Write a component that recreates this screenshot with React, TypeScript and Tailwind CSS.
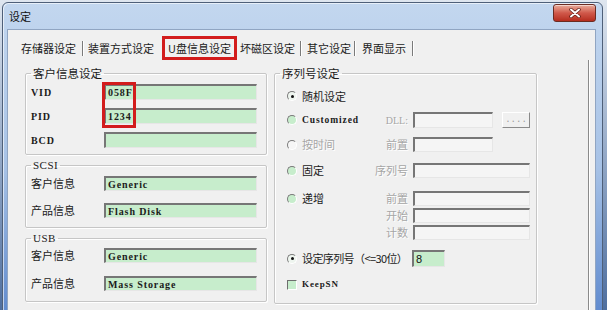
import type { ReactNode } from "react";

const cjk = "font-['Noto_Sans_CJK_SC',sans-serif]";
const latin = "font-['Liberation_Serif',serif] font-bold tracking-[0.9px]";

function Field({
  green = false,
  className = "",
  children,
}: {
  green?: boolean;
  className?: string;
  children?: ReactNode;
}) {
  return (
    <div
      className={`flex items-center pl-[2px] border-t-2 border-l-2 border-r border-b border-t-[#767676] border-l-[#767676] border-r-[#e6e6e6] border-b-[#e6e6e6] ${
        green ? "bg-[#c7edcc]" : "bg-[#f5f5f5]"
      } ${className}`}
    >
      {children}
    </div>
  );
}

function Radio({ checked = false, disabled = false }: { checked?: boolean; disabled?: boolean }) {
  return (
    <span
      className={`w-[10px] h-[10px] shrink-0 rounded-full border border-t-[#7a7a7a] border-l-[#7a7a7a] border-r-[#ffffff] border-b-[#ffffff] flex items-center justify-center ${
        disabled ? "bg-[#f6f6f6]" : checked ? "bg-[#eef5ef]" : "bg-[#c7edcc]"
      }`}
    >
      {checked && <span className="w-[3px] h-[3px] rounded-full bg-[#111]" />}
    </span>
  );
}

function GroupBox({
  title,
  titleClass,
  className = "",
  children,
}: {
  title: string;
  titleClass: string;
  className?: string;
  children: ReactNode;
}) {
  return (
    <fieldset
      className={`border border-[#c6c6c6] rounded-[2px] shadow-[inset_1px_1px_0_#ffffff,1px_1px_0_#ffffff] ${className}`}
    >
      <legend className={`ml-[5px] px-[2px] leading-[14px] text-[#1b1b1b] ${titleClass}`}>{title}</legend>
      {children}
    </fieldset>
  );
}

function InfoRow({ label, isLatin = false, value, rowClass }: { label: string; isLatin?: boolean; value: ReactNode; rowClass: string }) {
  return (
    <div className={`flex items-center ${rowClass}`}>
      <span className={`w-[73px] ${isLatin ? `${latin} text-[10px]` : `${cjk} text-[11px]`} text-[#1b1b1b]`}>
        {label}
      </span>
      <Field green className="w-[153px] h-full">
        <span className={`${latin} text-[10px] text-[#1b1b1b]`}>{value}</span>
      </Field>
    </div>
  );
}

function Sep({ className }: { className: string }) {
  return <span className={`block w-px h-[15px] bg-[#7a7a7a] shadow-[1px_0_0_#ffffff] shrink-0 ${className}`} />;
}

function Label({ children }: { children: ReactNode }) {
  return (
    <span className={`w-[38px] text-right ${cjk} text-[11px] text-[#a6a6a6] [text-shadow:1px_1px_0_#ffffff]`}>
      {children}
    </span>
  );
}

export default function App() {
  return (
    <div className="w-[607px] h-[310px] overflow-hidden bg-gradient-to-b from-[#dfe6ef] to-[#4f6f9f]">
      <div className="ml-[2px] mt-[2px] w-[601px] h-[330px] rounded-t-[6px] border border-[#4f6079] bg-gradient-to-b from-[#c3d7ef] via-[#a7c2e6] to-[#5884cb] shadow-[inset_1px_1px_0_rgba(255,255,255,0.6)] flex flex-col">
        {/* title bar */}
        <div className="h-[26px] flex items-start justify-between">
          <span className={`ml-[6px] mt-[6px] ${cjk} text-[11px] leading-[14px] text-[#111]`}>设定</span>
          <div className="mt-[1px] mr-[6px] w-[43px] h-[18px] rounded-[3px] border border-[#6b2b22] bg-gradient-to-b from-[#e7ab9c] via-[#d0584a] to-[#b52c1e] shadow-[inset_0_1px_0_rgba(255,255,255,0.5)] flex items-center justify-center">
            <svg width="12" height="10" viewBox="0 0 12 10">
              <path d="M2 1.5 L10 8.5 M10 1.5 L2 8.5" stroke="#5a1a14" strokeWidth="3.4" strokeLinecap="round" />
              <path d="M2 1.5 L10 8.5 M10 1.5 L2 8.5" stroke="#ffffff" strokeWidth="2" strokeLinecap="round" />
            </svg>
          </div>
        </div>

        {/* client area */}
        <div className="ml-[4px] w-[589px] flex-1 border border-[#90a5c2] bg-[#f0f0f0] flex flex-col">
          {/* tabs */}
          <div className={`h-[30px] pt-[6px] pl-[13px] flex items-center ${cjk} text-[11px] text-[#1b1b1b]`}>
            <span>存储器设定</span>
            <Sep className="ml-[6px]" />
            <span className="ml-[5px]">装置方式设定</span>
            <span className="ml-[8px] w-[75px] h-[24px] border-[3px] border-[#d21c1c] flex items-center justify-center">
              U盘信息设定
            </span>
            <span className="ml-[3px]">坏磁区设定</span>
            <Sep className="ml-[5px]" />
            <span className="ml-[6px]">其它设定</span>
            <Sep className="ml-[3px]" />
            <span className="ml-[7px]">界面显示</span>
            <Sep className="ml-[6px]" />
          </div>

          {/* tab page */}
          <div className="w-[581px] flex-1 border-r border-[#8a8a8a] shadow-[1px_0_0_#ffffff] pl-[17px] pt-[6px] flex items-start">
            <div className="w-[242px] flex flex-col">
              <GroupBox title="客户信息设定" titleClass={`${cjk} text-[11.5px]`}>
                <div className="relative pl-[5px] pt-[4px] pb-[6px] flex flex-col gap-[8px]">
                  <InfoRow label="VID" isLatin value="058F" rowClass="h-[16px]" />
                  <InfoRow
                    label="PID"
                    isLatin
                    value={
                      <span className="flex items-center">
                        1234<span className="ml-[1px] w-px h-[11px] bg-[#111]" />
                      </span>
                    }
                    rowClass="h-[16px]"
                  />
                  <InfoRow label="BCD" isLatin value="" rowClass="h-[16px]" />
                  <div className="absolute left-[76px] top-[2px] w-[34px] h-[46px] border-[3px] border-[#d21c1c]" />
                </div>
              </GroupBox>

              <GroupBox title="SCSI" titleClass="font-['Liberation_Serif',serif] text-[11px] tracking-[0.5px]" className="mt-[3px]">
                <div className="pl-[5px] pt-[4px] pb-[9px] flex flex-col gap-[12px]">
                  <InfoRow label="客户信息" value="Generic" rowClass="h-[15px]" />
                  <InfoRow label="产品信息" value="Flash Disk" rowClass="h-[15px]" />
                </div>
              </GroupBox>

              <GroupBox title="USB" titleClass="font-['Liberation_Serif',serif] text-[11px] tracking-[0.5px]" className="mt-[3px]">
                <div className="pl-[5px] pt-[3px] pb-[10px] flex flex-col gap-[13px]">
                  <InfoRow label="客户信息" value="Generic" rowClass="h-[15px]" />
                  <InfoRow label="产品信息" value="Mass Storage" rowClass="h-[15px]" />
                </div>
              </GroupBox>
            </div>

            <GroupBox title="序列号设定" titleClass={`${cjk} text-[11.5px]`} className="ml-[7px] w-[263px]">
              <div className={`pl-[12px] pt-[8px] pb-[12px] flex flex-col ${cjk} text-[11px] text-[#1b1b1b]`}>
                <div className="h-[16px] flex items-center">
                  <Radio checked />
                  <span className="ml-[5px]">随机设定</span>
                </div>

                <div className="mt-[8px] h-[16px] flex items-center">
                  <div className="w-[83px] flex items-center">
                    <Radio />
                    <span className={`ml-[5px] ${latin} text-[9.5px]`}>Customized</span>
                  </div>
                  <span className="w-[38px] text-right font-['Liberation_Serif',serif] text-[10px] text-[#a6a6a6] [text-shadow:1px_1px_0_#ffffff]">
                    DLL:
                  </span>
                  <Field className="ml-[5px] w-[80px] h-full" />
                  <div className="ml-[9px] w-[28px] h-full bg-[#f0f0f0] border border-t-[#ffffff] border-l-[#ffffff] border-r-[#8a8a8a] border-b-[#8a8a8a] flex items-end justify-center pb-[2px]">
                    <span className="font-['Liberation_Mono',monospace] text-[9px] leading-none text-[#9a9a9a]">....</span>
                  </div>
                </div>

                <div className="mt-[9px] h-[15px] flex items-center">
                  <div className="w-[83px] flex items-center">
                    <Radio disabled />
                    <span className="ml-[5px] text-[#a6a6a6] [text-shadow:1px_1px_0_#ffffff]">按时间</span>
                  </div>
                  <Label>前置</Label>
                  <Field className="ml-[5px] w-[80px] h-full" />
                </div>

                <div className="mt-[11px] h-[15px] flex items-center">
                  <div className="w-[83px] flex items-center">
                    <Radio />
                    <span className="ml-[5px]">固定</span>
                  </div>
                  <Label>序列号</Label>
                  <Field className="ml-[5px] w-[117px] h-full" />
                </div>

                <div className="mt-[13px] h-[15px] flex items-center">
                  <div className="w-[83px] flex items-center">
                    <Radio />
                    <span className="ml-[5px]">递增</span>
                  </div>
                  <Label>前置</Label>
                  <Field className="ml-[5px] w-[117px] h-full" />
                </div>
                <div className="mt-[2px] h-[15px] flex items-center">
                  <div className="w-[83px]" />
                  <Label>开始</Label>
                  <Field className="ml-[5px] w-[117px] h-full" />
                </div>
                <div className="mt-[2px] h-[15px] flex items-center">
                  <div className="w-[83px]" />
                  <Label>计数</Label>
                  <Field className="ml-[5px] w-[117px] h-full" />
                </div>

                <div className="mt-[10px] h-[17px] flex items-center">
                  <div className="w-[120px] flex items-center whitespace-nowrap">
                    <Radio checked />
                    <span className="ml-[5px] tracking-[-0.6px]">设定序列号（&lt;=30位）</span>
                  </div>
                  <Field green className="ml-[5px] w-[33px] h-full">
                    <span className="font-['Liberation_Sans',sans-serif] text-[11px] text-[#111]">8</span>
                  </Field>
                </div>

                <div className="mt-[12px] h-[12px] flex items-center">
                  <span className="w-[10px] h-[10px] bg-[#c7edcc] border border-t-[#6e6e6e] border-l-[#6e6e6e] border-r-[#ffffff] border-b-[#ffffff]" />
                  <span className={`ml-[5px] ${latin} text-[9px]`}>KeepSN</span>
                </div>
              </div>
            </GroupBox>
          </div>
        </div>
      </div>
    </div>
  );
}
